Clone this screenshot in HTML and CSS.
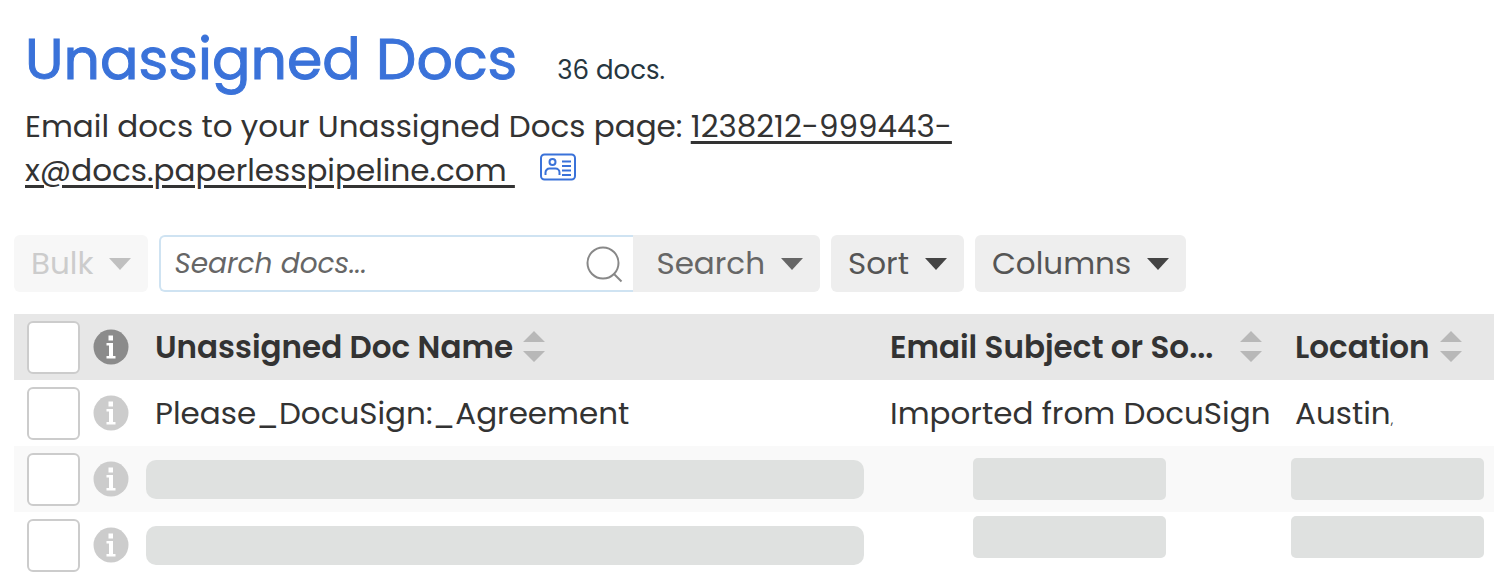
FILE: index.html
```html
<!DOCTYPE html>
<html lang="en">
<head>
<meta charset="UTF-8" />
<meta name="viewport" content="width=device-width, initial-scale=1" />
<title>Unassigned Docs</title>
<link rel="stylesheet" href="styles.css">
</head>
<body>

  <svg class="sprite" aria-hidden="true">
    <symbol id="info" viewBox="0 0 36 36">
      <circle cx="18" cy="18" r="17.5" fill="currentColor"/>
      <path class="info-mark" d="M15.500 6.500h4.500v5h-4.500zM13.500 14h6.500v13h2.500v2.500h-9V27h2.500V16.500h-2.500z"/>
    </symbol>
    <symbol id="caret" viewBox="0 0 22 12">
      <path d="M0 0h22L11 12z" fill="currentColor"/>
    </symbol>
    <symbol id="sort" viewBox="0 0 22 32">
      <path d="M0 11L11 0l11 11zM0 20h22L11 31z" fill="currentColor"/>
    </symbol>
  </svg>

  <header class="page-header">
    <div class="title-row">
      <h1>Unassigned Docs</h1>
      <span class="count">36 docs.</span>
    </div>
    <p class="email">Email docs to your Unassigned Docs page: <a href="mailto:1238212-999443-x@docs.paperlesspipeline.com">1238212-999443-<wbr>x@docs.paperlesspipeline.com&nbsp;</a>
      <button class="contact" type="button" aria-label="Add to contacts">
        <svg viewBox="0 0 36 28" width="36" height="28" fill="none" stroke="currentColor" stroke-width="2">
          <rect x="1" y="1.500" width="34" height="25" rx="3.500"/>
          <circle cx="12.500" cy="9" r="3"/>
          <path d="M5.500 22v-2.500a4 4 0 0 1 4-4h6a4 4 0 0 1 4 4V22M22 8.500h9M22 13h9M22 17.500h9M22 22h9"/>
        </svg>
      </button>
    </p>
  </header>

  <div class="toolbar">
    <button class="btn" type="button" disabled>Bulk <svg class="caret"><use href="#caret"/></svg></button>
    <form class="search">
      <div class="search-box">
        <input type="text" placeholder="Search docs..." aria-label="Search docs">
        <svg class="glass" viewBox="0 0 38 38" fill="none" stroke="currentColor" stroke-width="2">
          <circle cx="18" cy="18" r="15.500"/>
          <path d="M28.500 28.500l8 8"/>
        </svg>
      </div>
      <button class="btn search-btn" type="button">Search <svg class="caret"><use href="#caret"/></svg></button>
    </form>
    <button class="btn" type="button">Sort <svg class="caret"><use href="#caret"/></svg></button>
    <button class="btn" type="button">Columns <svg class="caret"><use href="#caret"/></svg></button>
  </div>

  <table class="docs">
    <colgroup>
      <col class="col-check">
      <col class="col-info">
      <col>
      <col class="col-subject">
      <col class="col-location">
    </colgroup>
    <thead>
      <tr>
        <th class="check"><input type="checkbox" aria-label="Select all docs"></th>
        <th class="info"><svg><use href="#info"/></svg></th>
        <th><div class="heading">Unassigned Doc Name <svg class="sort"><use href="#sort"/></svg></div></th>
        <th><div class="heading spread">Email Subject or So... <svg class="sort"><use href="#sort"/></svg></div></th>
        <th><div class="heading">Location <svg class="sort"><use href="#sort"/></svg></div></th>
      </tr>
    </thead>
    <tbody>
      <tr>
        <td class="check"><input type="checkbox" aria-label="Select Please_DocuSign:_Agreement"></td>
        <td class="info"><svg><use href="#info"/></svg></td>
        <td>Please_DocuSign:_Agreement</td>
        <td>Imported from DocuSign</td>
        <td>Austin<span class="cut">,</span></td>
      </tr>
      <tr>
        <td class="check"><input type="checkbox" aria-label="Select doc 2"></td>
        <td class="info"><svg><use href="#info"/></svg></td>
        <td class="blank"><div class="bar bar-name"></div></td>
        <td class="blank"><div class="bar bar-subject"></div></td>
        <td class="blank"><div class="bar bar-location"></div></td>
      </tr>
      <tr>
        <td class="check"><input type="checkbox" aria-label="Select doc 3"></td>
        <td class="info"><svg><use href="#info"/></svg></td>
        <td class="blank"><div class="bar bar-name"></div></td>
        <td class="blank top"><div class="bar bar-subject"></div></td>
        <td class="blank top"><div class="bar bar-location"></div></td>
      </tr>
    </tbody>
  </table>

</body>
</html>
```

FILE: styles.css
```css
* {
  box-sizing: border-box;
}

body {
  margin: 0;
  padding: 24px 0 0 14px;
  background: #fff;
  color: #333;
  font-family: Poppins, Inter, sans-serif;
  font-size: 31px;
}

.sprite {
  display: none;
}

.page-header {
  padding-left: 11px;
}

.title-row {
  display: flex;
  align-items: baseline;
  gap: 40px;
}

h1 {
  margin: 0;
  color: #3a72d9;
  font-size: 57px;
  font-weight: 400;
  line-height: 70px;
  -webkit-text-stroke: 1px #3a72d9;
}

.count {
  color: #263640;
  font-size: 26px;
}

.email {
  max-width: 960px;
  margin: 10px 0 43px;
  line-height: 44px;
}

.email a {
  color: #333;
  text-underline-offset: 4px;
  text-decoration-thickness: 3px;
}

.contact {
  margin: 0 0 0 17px;
  padding: 0;
  border: 0;
  background: none;
  color: #3a72d9;
  line-height: 0;
}

/* Toolbar */
.toolbar {
  display: flex;
  gap: 11px;
  margin-bottom: 22px;
}

.btn {
  display: flex;
  align-items: center;
  gap: 16px;
  height: 57px;
  padding: 0 17px;
  border: 0;
  border-radius: 6px;
  background: #eee;
  color: #555;
  font: inherit;
}

.btn:disabled {
  background: #f7f7f7;
  color: #ccc;
}

.caret {
  width: 22px;
  height: 12px;
  color: #444;
}

.btn:disabled .caret {
  color: #c0c0c0;
}

.search {
  display: flex;
}

.search-box {
  display: flex;
  align-items: center;
  width: 474px;
  padding: 0 10px 0 13px;
  border: 2px solid #cfe3f2;
  border-right: 0;
  border-radius: 6px 0 0 6px;
}

.search-box input {
  flex: 1;
  min-width: 0;
  padding: 0;
  border: 0;
  outline: 0;
  color: #333;
  font: inherit;
  font-size: 28px;
}

.search-box input::placeholder {
  color: #666;
  font-style: italic;
}

.glass {
  width: 38px;
  height: 38px;
  color: #888;
}

.search-btn {
  padding-left: 23px;
  border-radius: 0 6px 6px 0;
  color: #666;
}

.search-btn .caret {
  color: #666;
}

/* Table */
.docs {
  width: 100%;
  border-collapse: collapse;
  table-layout: fixed;
}

.col-check {
  width: 79px;
}

.col-info {
  width: 53px;
}

.col-subject {
  width: 405px;
}

.col-location {
  width: 208px;
}

.docs tr {
  height: 66px;
}

.docs th,
.docs td {
  padding: 0 0 0 9px;
  text-align: left;
  white-space: nowrap;
}

.docs thead tr {
  background: #e7e7e7;
}

.docs tbody tr:nth-child(even) {
  background: #f9f9f9;
}

.docs .check {
  padding-left: 13px;
  line-height: 0;
}

.check input {
  appearance: none;
  width: 53px;
  height: 53px;
  margin: 0;
  border: 2px solid #ccc;
  border-radius: 6px;
  background: #fff;
}

.docs .info {
  padding: 0;
  color: #ccc;
  line-height: 0;
}

.docs thead .info {
  color: #8b8b8b;
}

.info svg {
  width: 36px;
  height: 36px;
}

.info-mark {
  fill: #fff;
}

.heading {
  display: flex;
  align-items: center;
  gap: 10px;
  font-weight: 600;
}

.spread {
  justify-content: space-between;
  padding-right: 24px;
}

.sort {
  width: 22px;
  height: 32px;
  flex: none;
  color: #b8b8b8;
}

.cut {
  font-size: 12px;
}

.docs .blank {
  padding-left: 0;
}

.docs .top {
  padding-top: 4px;
  vertical-align: top;
}

.bar {
  height: 42px;
  border-radius: 5px;
  background: #dfe1e0;
}

.bar-name {
  height: 39px;
  margin-right: 17px;
  border-radius: 10px;
}

.bar-subject {
  width: 193px;
  margin-left: 92px;
}

.bar-location {
  width: 193px;
  margin-left: 5px;
}
```
